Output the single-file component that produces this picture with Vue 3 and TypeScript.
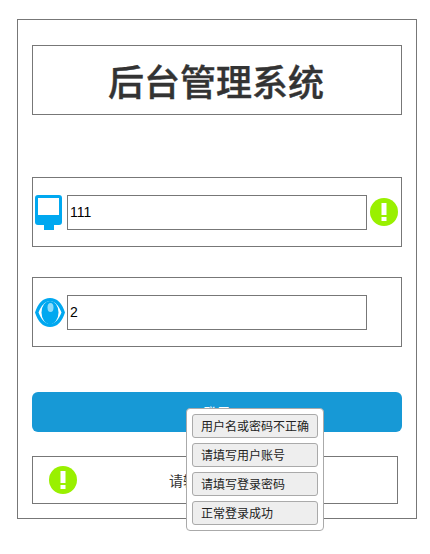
<script setup lang="ts">
import { ref } from 'vue'

const username = ref<string>('111')
const password = ref<string>('2')
const messages: string[] = ['用户名或密码不正确', '请填写用户账号', '请填写登录密码', '正常登录成功']
const notice = ref<string>('请输入账号')
</script>

<template>
  <div class="wrap">
    <div class="page">
      <div class="title-box">
        <h1>后台管理系统</h1>
      </div>

      <div class="field first">
        <svg class="icon" width="27" height="35" viewBox="0 0 27 35">
          <path fill="#00a8f0" fill-rule="evenodd" d="M3 0h21a3 3 0 0 1 3 3v24a3 3 0 0 1-3 3h-5v5H9v-5H3a3 3 0 0 1-3-3V3a3 3 0 0 1 3-3zM3 3v17h21V3z" />
        </svg>
        <input v-model="username" type="text" />
        <svg class="alert" width="28" height="28" viewBox="0 0 28 28">
          <circle cx="14" cy="14" r="14" fill="#99f000" />
          <rect x="11.500" y="5" width="5" height="12" fill="#fff" />
          <rect x="11.500" y="19" width="5" height="4" fill="#fff" />
        </svg>
      </div>

      <div class="field second">
        <svg class="icon" width="30" height="29" viewBox="0 0 30 29">
          <path fill="#00a8f0" fill-rule="evenodd" d="M0 14.500C3 5 8 0 15 0 22 0 27 5 30 14.500 27 24 22 29 15 29 8 29 3 24 0 14.500zM3.500 14.500C6 21 10 26 15 26 20 26 24 21 26.500 14.500 24 8 20 3 15 3 10 3 6 8 3.500 14.500z" />
          <ellipse cx="15" cy="14.500" rx="8.500" ry="11.500" fill="#00a8f0" />
          <ellipse cx="15.500" cy="9.500" rx="3" ry="4.500" fill="#8fdcfa" />
        </svg>
        <input v-model="password" type="text" />
      </div>

      <button class="submit" type="button">登录</button>

      <div class="notice">
        <svg class="notice-alert" width="28" height="28" viewBox="0 0 28 28">
          <circle cx="14" cy="14" r="14" fill="#99f000" />
          <rect x="11.500" y="5" width="5" height="12" fill="#fff" />
          <rect x="11.500" y="19" width="5" height="4" fill="#fff" />
        </svg>
        <span>{{ notice }}</span>
      </div>

      <div class="menu">
        <button v-for="m in messages" :key="m" type="button">{{ m }}</button>
      </div>
    </div>
  </div>
</template>

<style scoped>
.wrap {
  box-sizing: border-box;
  height: 554px;
  padding: 19px 0 0 17px;
}

.page {
  position: relative;
  box-sizing: border-box;
  width: 400px;
  height: 500px;
  padding: 25px 14px 0;
  border: 1px solid #777;
  font-family: "Liberation Sans", "Noto Sans CJK SC", sans-serif;
  font-size: 14px;
  color: #333;
}

.title-box {
  box-sizing: border-box;
  height: 70px;
  border: 1px solid #777;
  display: flex;
  align-items: center;
  justify-content: center;
}

h1 {
  margin: 0 0 0 -2px;
  font-size: 36px;
  font-weight: 500;
  color: #333;
  -webkit-text-stroke: 0.4px #333;
}

.field {
  box-sizing: border-box;
  height: 70px;
  border: 1px solid #777;
  display: flex;
  align-items: center;
  padding-left: 2px;
}

.first {
  margin-top: 62px;
}

.second {
  margin-top: 30px;
}

.icon {
  flex: none;
}

.first input {
  margin-left: 5px;
}

.second input {
  margin-left: 2px;
}

.field input {
  box-sizing: border-box;
  width: 300px;
  height: 35px;
  padding: 1px 2px;
  border: 1px solid #777;
  background: #fff;
  color: #000;
  font: 14px "Liberation Sans", sans-serif;
  outline: none;
}

.alert {
  flex: none;
  margin-left: 3px;
}

.submit {
  display: block;
  width: 370px;
  height: 40px;
  margin-top: 45px;
  border: none;
  border-radius: 6px;
  background: #1799d6;
  color: #fff;
  font: 14px "Liberation Sans", "Noto Sans CJK SC", sans-serif;
}

.notice {
  box-sizing: border-box;
  width: 366px;
  height: 48px;
  margin-top: 24px;
  border: 1px solid #777;
  display: flex;
  align-items: center;
  padding-left: 16px;
}

.notice-alert {
  flex: none;
}

.notice span {
  margin-left: 92px;
}

.menu {
  position: absolute;
  left: 168px;
  top: 388px;
  box-sizing: border-box;
  width: 138px;
  height: 123px;
  padding: 5px;
  border: 1px solid #aaa;
  border-radius: 4px;
  background: #fff;
  display: flex;
  flex-direction: column;
  gap: 5px;
}

.menu button {
  box-sizing: border-box;
  width: 126px;
  height: 24px;
  padding: 0 0 2px 8px;
  border: 1px solid #aaa;
  border-radius: 3px;
  background: #eee;
  color: #222;
  text-align: left;
  font: 12px "Liberation Sans", "Noto Sans CJK SC", sans-serif;
}
</style>
